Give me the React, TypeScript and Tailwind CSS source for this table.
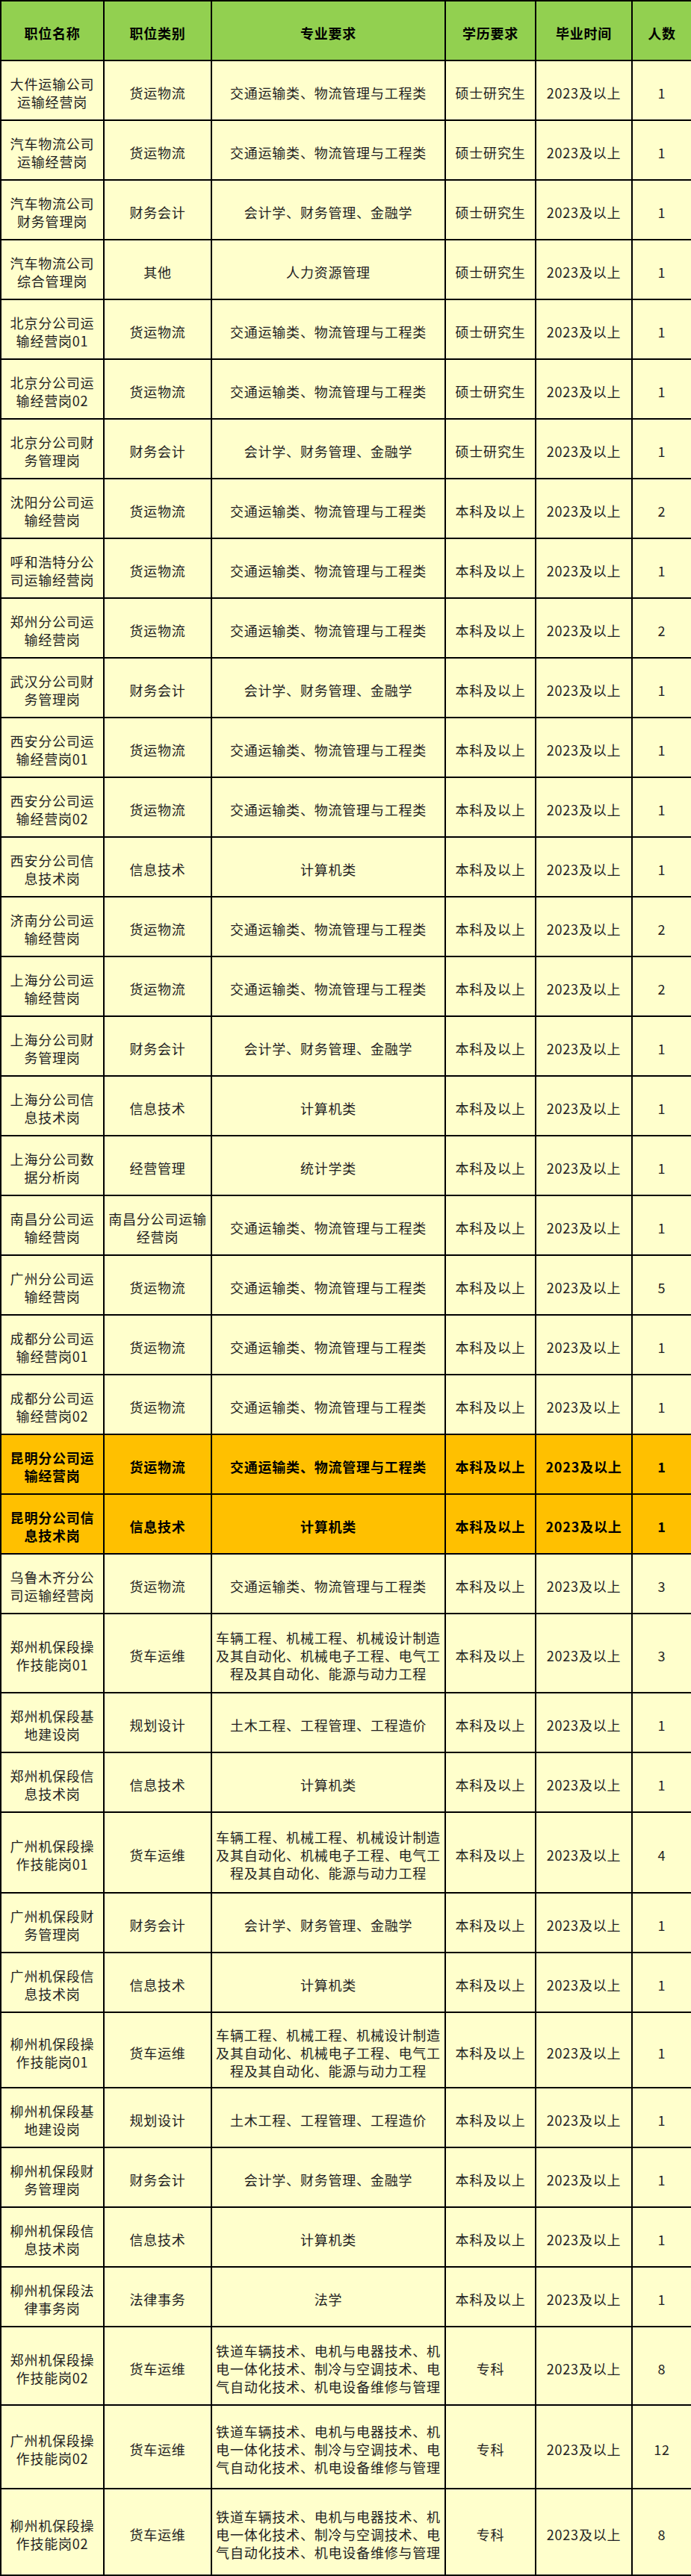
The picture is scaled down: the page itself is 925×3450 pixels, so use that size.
type Row = {
  name: string[];
  cat: string[];
  major: string[];
  edu: string;
  count: string;
  h?: string;
  hot?: boolean;
};

const JT = ["交通运输类、物流管理与工程类"];
const KJ = ["会计学、财务管理、金融学"];
const JSJ = ["计算机类"];
const TM = ["土木工程、工程管理、工程造价"];
const CL = [
  "车辆工程、机械工程、机械设计制造",
  "及其自动化、机械电子工程、电气工",
  "程及其自动化、能源与动力工程",
];
const TD = [
  "铁道车辆技术、电机与电器技术、机",
  "电一体化技术、制冷与空调技术、电",
  "气自动化技术、机电设备维修与管理",
];
const SS = "硕士研究生";
const BK = "本科及以上";

const rows: Row[] = [
  { name: ["大件运输公司", "运输经营岗"], cat: ["货运物流"], major: JT, edu: SS, count: "1" },
  { name: ["汽车物流公司", "运输经营岗"], cat: ["货运物流"], major: JT, edu: SS, count: "1" },
  { name: ["汽车物流公司", "财务管理岗"], cat: ["财务会计"], major: KJ, edu: SS, count: "1" },
  { name: ["汽车物流公司", "综合管理岗"], cat: ["其他"], major: ["人力资源管理"], edu: SS, count: "1" },
  { name: ["北京分公司运", "输经营岗01"], cat: ["货运物流"], major: JT, edu: SS, count: "1" },
  { name: ["北京分公司运", "输经营岗02"], cat: ["货运物流"], major: JT, edu: SS, count: "1" },
  { name: ["北京分公司财", "务管理岗"], cat: ["财务会计"], major: KJ, edu: SS, count: "1" },
  { name: ["沈阳分公司运", "输经营岗"], cat: ["货运物流"], major: JT, edu: BK, count: "2" },
  { name: ["呼和浩特分公", "司运输经营岗"], cat: ["货运物流"], major: JT, edu: BK, count: "1" },
  { name: ["郑州分公司运", "输经营岗"], cat: ["货运物流"], major: JT, edu: BK, count: "2" },
  { name: ["武汉分公司财", "务管理岗"], cat: ["财务会计"], major: KJ, edu: BK, count: "1" },
  { name: ["西安分公司运", "输经营岗01"], cat: ["货运物流"], major: JT, edu: BK, count: "1" },
  { name: ["西安分公司运", "输经营岗02"], cat: ["货运物流"], major: JT, edu: BK, count: "1" },
  { name: ["西安分公司信", "息技术岗"], cat: ["信息技术"], major: JSJ, edu: BK, count: "1" },
  { name: ["济南分公司运", "输经营岗"], cat: ["货运物流"], major: JT, edu: BK, count: "2" },
  { name: ["上海分公司运", "输经营岗"], cat: ["货运物流"], major: JT, edu: BK, count: "2" },
  { name: ["上海分公司财", "务管理岗"], cat: ["财务会计"], major: KJ, edu: BK, count: "1" },
  { name: ["上海分公司信", "息技术岗"], cat: ["信息技术"], major: JSJ, edu: BK, count: "1" },
  { name: ["上海分公司数", "据分析岗"], cat: ["经营管理"], major: ["统计学类"], edu: BK, count: "1" },
  { name: ["南昌分公司运", "输经营岗"], cat: ["南昌分公司运输", "经营岗"], major: JT, edu: BK, count: "1" },
  { name: ["广州分公司运", "输经营岗"], cat: ["货运物流"], major: JT, edu: BK, count: "5" },
  { name: ["成都分公司运", "输经营岗01"], cat: ["货运物流"], major: JT, edu: BK, count: "1" },
  { name: ["成都分公司运", "输经营岗02"], cat: ["货运物流"], major: JT, edu: BK, count: "1" },
  { name: ["昆明分公司运", "输经营岗"], cat: ["货运物流"], major: JT, edu: BK, count: "1", hot: true },
  { name: ["昆明分公司信", "息技术岗"], cat: ["信息技术"], major: JSJ, edu: BK, count: "1", hot: true },
  { name: ["乌鲁木齐分公", "司运输经营岗"], cat: ["货运物流"], major: JT, edu: BK, count: "3" },
  { name: ["郑州机保段操", "作技能岗01"], cat: ["货车运维"], major: CL, edu: BK, count: "3", h: "h-[106px]" },
  { name: ["郑州机保段基", "地建设岗"], cat: ["规划设计"], major: TM, edu: BK, count: "1" },
  { name: ["郑州机保段信", "息技术岗"], cat: ["信息技术"], major: JSJ, edu: BK, count: "1" },
  { name: ["广州机保段操", "作技能岗01"], cat: ["货车运维"], major: CL, edu: BK, count: "4", h: "h-[108px]" },
  { name: ["广州机保段财", "务管理岗"], cat: ["财务会计"], major: KJ, edu: BK, count: "1" },
  { name: ["广州机保段信", "息技术岗"], cat: ["信息技术"], major: JSJ, edu: BK, count: "1" },
  { name: ["柳州机保段操", "作技能岗01"], cat: ["货车运维"], major: CL, edu: BK, count: "1", h: "h-[101px]" },
  { name: ["柳州机保段基", "地建设岗"], cat: ["规划设计"], major: TM, edu: BK, count: "1" },
  { name: ["柳州机保段财", "务管理岗"], cat: ["财务会计"], major: KJ, edu: BK, count: "1" },
  { name: ["柳州机保段信", "息技术岗"], cat: ["信息技术"], major: JSJ, edu: BK, count: "1" },
  { name: ["柳州机保段法", "律事务岗"], cat: ["法律事务"], major: ["法学"], edu: BK, count: "1" },
  { name: ["郑州机保段操", "作技能岗02"], cat: ["货车运维"], major: TD, edu: "专科", count: "8", h: "h-[105px]" },
  { name: ["广州机保段操", "作技能岗02"], cat: ["货车运维"], major: TD, edu: "专科", count: "12", h: "h-[112px]" },
  { name: ["柳州机保段操", "作技能岗02"], cat: ["货车运维"], major: TD, edu: "专科", count: "8", h: "h-[116px]" },
];

function Lines({ lines }: { lines: string[] }) {
  return (
    <>
      {lines.map((l, i) => (
        <span key={i} className="block whitespace-nowrap">
          {l}
        </span>
      ))}
    </>
  );
}

const cell = "border-2 border-black px-0 pt-[6px] pb-0 text-center align-middle";

export default function App() {
  return (
    <div className="w-[925px] bg-white font-['Noto_Sans_CJK_SC','Noto_Sans',sans-serif] text-[18px] leading-[24px] tracking-[0.8px] text-[#222]">
      <table className="w-[925px] table-fixed border-collapse">
        <colgroup>
          <col className="w-[138px]" />
          <col className="w-[144px]" />
          <col className="w-[313px]" />
          <col className="w-[121px]" />
          <col className="w-[129px]" />
          <col className="w-[80px]" />
        </colgroup>
        <thead>
          <tr className="h-[80px] bg-[#92d050] font-bold text-black">
            <th className={cell}>职位名称</th>
            <th className={cell}>职位类别</th>
            <th className={cell}>专业要求</th>
            <th className={cell}>学历要求</th>
            <th className={cell}>毕业时间</th>
            <th className={cell}>人数</th>
          </tr>
        </thead>
        <tbody>
          {rows.map((r, i) => (
            <tr
              key={i}
              className={`${r.h ?? "h-[80px]"} ${
                r.hot ? "bg-[#ffc000] font-bold text-black" : "bg-[#ffffcc]"
              }`}
            >
              <td className={cell}>
                <Lines lines={r.name} />
              </td>
              <td className={cell}>
                <Lines lines={r.cat} />
              </td>
              <td className={cell}>
                <Lines lines={r.major} />
              </td>
              <td className={cell}>{r.edu}</td>
              <td className={cell}>2023及以上</td>
              <td className={cell}>{r.count}</td>
            </tr>
          ))}
        </tbody>
      </table>
    </div>
  );
}
